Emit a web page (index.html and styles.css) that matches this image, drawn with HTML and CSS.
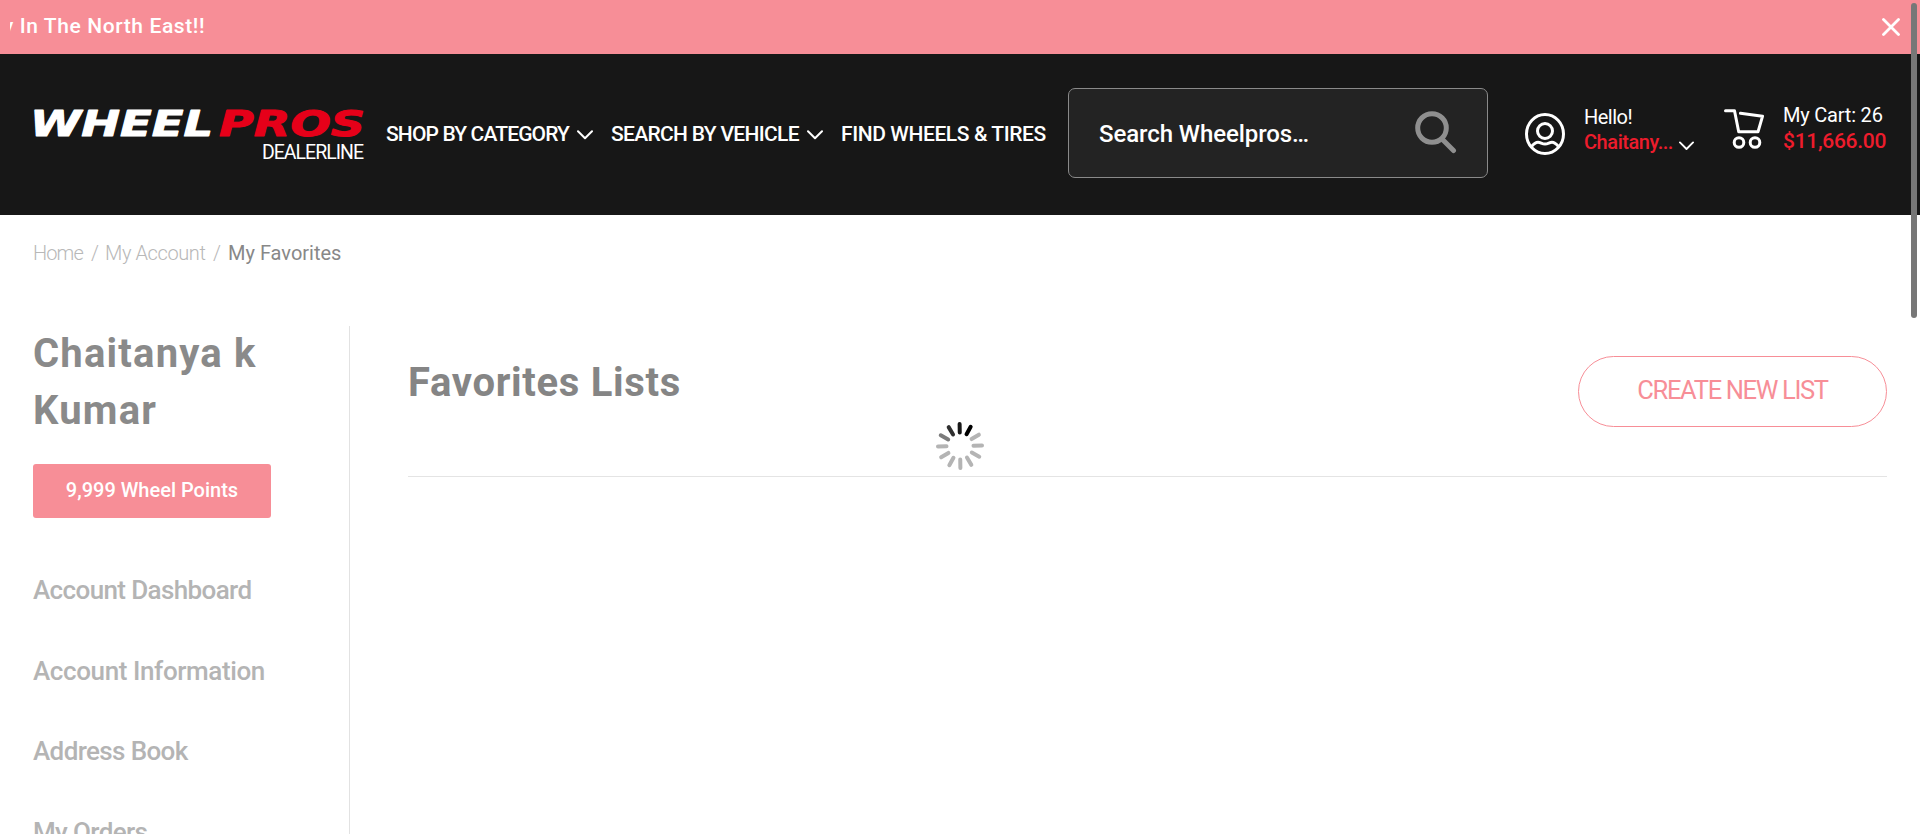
FILE: index.html
```
<!DOCTYPE html>
<html lang="en">
<head>
<meta charset="utf-8">
<title>My Favorites</title>
<link rel="stylesheet" href="styles.css">
</head>
<body>
<div class="banner">
  <div class="ticker"><span class="ticker-text">y In The North East!!</span></div>
  <svg class="close" viewBox="0 0 18 18"><path d="M1.500 1.500l15 15M16.500 1.500l-15 15"/></svg>
</div>
<header class="header">
  <div class="logo">
    <svg class="wordmark" viewBox="0 0 331 40">
      <text class="wm white" x="-3" y="33" textLength="183" lengthAdjust="spacingAndGlyphs">WHEEL</text>
      <text class="wm red" x="186" y="33" textLength="146" lengthAdjust="spacingAndGlyphs">PROS</text>
    </svg>
    <span class="dealer">DEALERLINE</span>
  </div>
  <nav class="nav">
    <a class="nav-item n1"><span>SHOP BY CATEGORY</span><svg class="chev" viewBox="0 0 16 10"><path d="M1 1.200l7 7 7-7"/></svg></a>
    <a class="nav-item n2"><span>SEARCH BY VEHICLE</span><svg class="chev" viewBox="0 0 16 10"><path d="M1 1.200l7 7 7-7"/></svg></a>
    <a class="nav-item n3"><span>FIND WHEELS &amp; TIRES</span></a>
  </nav>
  <div class="search">
    <span class="search-text">Search Wheelpros…</span>
    <svg class="lens" viewBox="0 0 44 44"><circle cx="18" cy="18" r="14.300"/><path d="M28.500 29.500L39.500 40.500"/></svg>
  </div>
  <svg class="user-icon" viewBox="0 0 40 42"><ellipse cx="20" cy="21" rx="18.500" ry="19.500"/><circle cx="20" cy="18" r="7.500"/><path d="M6.500 33.500c2.500-3 4.500-4.300 6.500-4.300 2.500 0 4 1.800 7 1.800s4.500-1.800 7-1.800c2 0 4 1.300 6.500 4.300"/></svg>
  <div class="account">
    <span class="hello">Hello!</span>
    <span class="name"><span class="red-text">Chaitany...</span><svg class="chev small" viewBox="0 0 16 10"><path d="M1 1.200l7 7 7-7"/></svg></span>
  </div>
  <svg class="cart-icon" viewBox="0 0 40 40"><path d="M1.500 1.800h9l4.200 21h19.300l4.500-15.500-22-3"/><circle cx="15" cy="33.500" r="4.800"/><circle cx="31" cy="33.500" r="4.800"/></svg>
  <div class="cart">
    <span class="cart-count">My Cart: 26</span>
    <span class="cart-total">$11,666.00</span>
  </div>
</header>
<div class="crumbs">
  <span class="c1">Home</span><span class="s1">/</span><span class="c2">My Account</span><span class="s2">/</span><span class="current">My Favorites</span>
</div>
<div class="content">
  <aside class="side">
    <h2 class="person">Chaitanya k<br>Kumar</h2>
    <div class="points">9,999 Wheel Points</div>
    <ul class="menu">
      <li>Account Dashboard</li>
      <li class="wide">Account Information</li>
      <li>Address Book</li>
      <li>My Orders</li>
    </ul>
  </aside>
  <main class="main">
    <div class="title-row">
      <h1 class="title">Favorites Lists</h1>
      <button class="create">CREATE NEW LIST</button>
    </div>
  </main>
</div>
<svg class="spinner" viewBox="-25 -25 50 50">
  <g transform="rotate(-1)">
    <g stroke="#b4b4b4">
      <path d="M0-13.500V-22" transform="rotate(60)"/>
      <path d="M0-13.500V-22" transform="rotate(90)"/>
      <path d="M0-13.500V-22" transform="rotate(120)"/>
      <path d="M0-13.500V-22" transform="rotate(150)"/>
      <path d="M0-13.500V-22" transform="rotate(180)"/>
      <path d="M0-13.500V-22" transform="rotate(210)"/>
      <path d="M0-13.500V-22" transform="rotate(240)"/>
      <path d="M0-13.500V-22" transform="rotate(270)"/>
    </g>
    <path stroke="#7c7c7c" d="M0-13.500V-22" transform="rotate(300)"/>
    <path stroke="#303030" d="M0-13.500V-22" transform="rotate(330)"/>
    <path stroke="#181818" d="M0-13.500V-22"/>
    <path stroke="#000" d="M0-13.500V-22" transform="rotate(30)"/>
  </g>
</svg>
<div class="scrollbar"></div>
</body>
</html>
```
FILE: styles.css
```
* { box-sizing: border-box; }
body { margin: 0; height: 834px; overflow: hidden; background: #fff; font-family: Roboto, "Liberation Sans", sans-serif; position: relative; }
svg { display: block; flex: none; fill: none; stroke-linecap: round; stroke-linejoin: round; }
span { white-space: nowrap; }
.banner { height: 54px; background: #f78e97; display: flex; align-items: center; justify-content: space-between; padding: 0 20px 2px 10px; }
.ticker { overflow: hidden; color: #fff; font-size: 21px; font-weight: 500; line-height: 30px; letter-spacing: 0.600px; width: 1800px; }
.ticker-text { margin-left: -7px; }
.close { width: 18px; height: 18px; stroke: #fff; stroke-width: 2.800; margin-top: 2px; }
.header { height: 161px; background: #171717; color: #fff; display: flex; align-items: center; padding: 0 0 3px 33px; }
.logo { width: 331px; height: 60px; display: flex; flex-direction: column; align-items: flex-end; margin-top: -1px; }
.wordmark { width: 331px; height: 40px; overflow: visible; }
.wm { font: italic bold 35px "DejaVu Sans", sans-serif; }
.white { fill: #fff; stroke: #fff; }
.red { fill: #e60019; stroke: #e60019; }
.dealer { font-size: 19.500px; line-height: 24px; letter-spacing: -1px; margin: -2px 1px 0 0; }
.nav { display: flex; font-size: 21px; font-weight: 500; line-height: 30px; margin-left: 22px; width: 682px; padding-top: 2px; }
.nav-item { display: flex; align-items: center; }
.n1 { width: 225px; letter-spacing: -0.860px; }
.n2 { width: 230px; letter-spacing: -0.680px; }
.n3 { letter-spacing: -0.400px; }
.chev { width: 16px; height: 10px; stroke: #fff; stroke-width: 2; margin: 2px 0 0 8px; }
.search { width: 420px; height: 90px; border: 1px solid #8a8a8a; border-radius: 7px; background: #232323; display: flex; align-items: center; justify-content: space-between; padding: 0 29px 0 30px; }
.search-text { font-size: 24px; font-weight: 500; line-height: 32px; padding-top: 2px; letter-spacing: -0.080px; }
.lens { width: 44px; height: 44px; stroke: #8f8f8f; stroke-width: 5; margin-top: -2px; }
.user-icon { width: 40px; height: 42px; stroke: #fff; stroke-width: 3; margin: 2px 19px 0 37px; }
.account { width: 140px; display: flex; flex-direction: column; font-size: 20px; line-height: 25px; margin-top: -7px; }
.hello { letter-spacing: -0.500px; }
.name { display: flex; align-items: center; font-weight: 500; }
.red-text, .cart-total { color: #ed1c2c; font-weight: 500; }
.red-text { letter-spacing: -0.440px; }
.chev.small { width: 15px; height: 10px; margin: 7px 0 0 6px; }
.cart-icon { width: 40px; height: 40px; stroke: #fff; stroke-width: 3; margin: -8px 19px 0 0; }
.cart { display: flex; flex-direction: column; font-size: 20px; line-height: 26px; margin-top: -10px; letter-spacing: -0.200px; }
.cart-total { font-size: 21px; letter-spacing: -0.300px; }
.crumbs { height: 111px; padding: 23px 0 0 33px; display: flex; font-size: 20px; line-height: 30px; font-weight: 300; color: #b8b8b8; }
.c1 { width: 58px; letter-spacing: -0.900px; }
.s1 { width: 14px; }
.c2 { width: 108px; letter-spacing: -0.400px; }
.s2 { width: 15px; }
.current { font-weight: 400; color: #888; }
.content { display: flex; height: 508px; }
.side { width: 350px; border-right: 1px solid #e2e2e2; padding-left: 33px; }
.person { margin: -1px 0 0; font-size: 40px; line-height: 57px; font-weight: 700; color: #8a8a8a; letter-spacing: 1.200px; }
.points { width: 238px; height: 54px; margin-top: 25px; padding-bottom: 2px; border-radius: 3px; background: #f78e97; color: #fff; display: flex; align-items: center; justify-content: center; font-size: 20px; font-weight: 500; }
.menu { list-style: none; margin: 32px 0 0; padding: 0; font-size: 26px; font-weight: 500; color: #b4b4b4; line-height: 80.500px; letter-spacing: -0.620px; }
.wide { letter-spacing: -0.390px; }
.main { flex: 1; padding: 30px 33px 0 58px; }
.title-row { display: flex; justify-content: space-between; height: 121px; border-bottom: 1px solid #e4e4e4; }
.title { margin: 0; font-size: 40px; line-height: 54px; font-weight: 700; color: #858585; letter-spacing: 0.690px; }
.create { width: 309px; height: 71px; border: 1px solid #f78e97; border-radius: 36px; background: #fff; color: #f78e97; font: 400 25.500px Roboto, sans-serif; letter-spacing: -1.350px; padding: 0 0 3px; }
.spinner { position: absolute; left: 935px; top: 421px; width: 50px; height: 50px; stroke-width: 4; }
.scrollbar { position: absolute; right: 3px; top: 3px; width: 6px; height: 315px; border-radius: 3px; background: #777; }
```
